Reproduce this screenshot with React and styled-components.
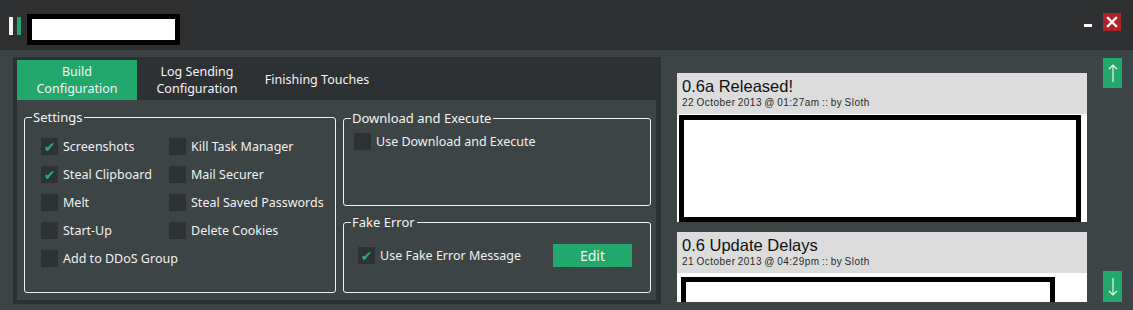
import React from 'react'
import styled, { createGlobalStyle } from 'styled-components'

const GlobalStyle = createGlobalStyle`
  html, body {
    margin: 0;
    padding: 0;
    background: #3c4446;
  }
  * {
    box-sizing: border-box;
  }
`

const green = '#22a86c'
const uiFont = `"Noto Sans", "Open Sans", sans-serif`

const settings = [
  { label: 'Screenshots', checked: true },
  { label: 'Kill Task Manager' },
  { label: 'Steal Clipboard', checked: true },
  { label: 'Mail Securer' },
  { label: 'Melt' },
  { label: 'Steal Saved Passwords' },
  { label: 'Start-Up' },
  { label: 'Delete Cookies' },
  { label: 'Add to DDoS Group' },
]

const news = [
  { title: '0.6a Released!', meta: '22 October 2013 @ 01:27am :: by Sloth', boxWidth: 402, boxHeight: 107 },
  { title: '0.6 Update Delays', meta: '21 October 2013 @ 04:29pm :: by Sloth', boxWidth: 374, boxHeight: 40, inset: 4 },
]

export default function App() {
  return (
    <Window>
      <GlobalStyle />
      <TitleBar>
        <Logo>
          <span className="bar-white" />
          <span className="bar-green" />
        </Logo>
        <TitleBox />
        <WindowControls>
          <Minimize />
          <CloseButton>
            <svg width="12" height="12" viewBox="0 0 12 12">
              <path d="M2 2 L10 10 M10 2 L2 10" stroke="#fff" strokeWidth="2.4" strokeLinecap="square" />
            </svg>
          </CloseButton>
        </WindowControls>
      </TitleBar>

      <Body>
        <TabPanel>
          <TabBar>
            <Tab $active>Build<br />Configuration</Tab>
            <Tab>Log Sending<br />Configuration</Tab>
            <Tab>Finishing Touches</Tab>
          </TabBar>
          <TabContent>
            <Group $width={312} $height={184}>
              <legend>Settings</legend>
              <SettingsGrid>
                {settings.map(s => (
                  <Check key={s.label} label={s.label} checked={s.checked} />
                ))}
              </SettingsGrid>
            </Group>
            <RightGroups>
              <Group $height={96} $top={1}>
                <legend>Download and Execute</legend>
                <SingleRow $pad={10}>
                  <Check label="Use Download and Execute" />
                </SingleRow>
              </Group>
              <Group $height={79} $top={8}>
                <legend>Fake Error</legend>
                <FakeErrorRow>
                  <Check label="Use Fake Error Message" checked />
                  <EditButton>Edit</EditButton>
                </FakeErrorRow>
              </Group>
            </RightGroups>
          </TabContent>
        </TabPanel>

        <NewsFeed>
          {news.map(n => (
            <NewsCard key={n.title}>
              <NewsHeader>
                <h3>{n.title}</h3>
                <p>{n.meta}</p>
              </NewsHeader>
              <NewsBody $inset={n.inset}>
                <RedactedBox style={{ width: n.boxWidth, height: n.boxHeight }} />
              </NewsBody>
            </NewsCard>
          ))}
        </NewsFeed>

        <ScrollButtons>
          <ScrollButton>
            <svg width="10" height="20" viewBox="0 0 10 20">
              <path d="M5 19 V2 M1 6 L5 2 L9 6" stroke="#eef3df" strokeWidth="1.2" fill="none" />
            </svg>
          </ScrollButton>
          <ScrollButton $down>
            <svg width="10" height="20" viewBox="0 0 10 20">
              <path d="M5 1 V18 M1 14 L5 18 L9 14" stroke="#eef3df" strokeWidth="1.2" fill="none" />
            </svg>
          </ScrollButton>
        </ScrollButtons>
      </Body>
    </Window>
  )
}

const Check = ({ label, checked }) => (
  <CheckRow>
    <CheckBox>{checked && '✔'}</CheckBox>
    <span>{label}</span>
  </CheckRow>
)

const Window = styled.div`
  width: 1133px;
  height: 310px;
  display: flex;
  flex-direction: column;
  background: #3c4446;
  overflow: hidden;
  font-family: ${uiFont};
`

const TitleBar = styled.div`
  height: 50px;
  flex-shrink: 0;
  background: #2d2f31;
  display: flex;
  align-items: center;
  padding: 0 12px 0 9px;
`

const Logo = styled.div`
  display: flex;
  gap: 4px;
  margin-top: 2px;
  span {
    width: 4px;
    height: 18px;
  }
  .bar-white {
    background: #f2f2f2;
  }
  .bar-green {
    background: ${green};
  }
`

const TitleBox = styled.div`
  width: 153px;
  height: 31px;
  margin-left: 6px;
  margin-top: 9px;
  background: #fff;
  border: 5px solid #000;
`

const WindowControls = styled.div`
  margin-left: auto;
  display: flex;
  align-items: center;
  gap: 11px;
  margin-top: -6px;
`

const Minimize = styled.div`
  width: 8px;
  height: 3px;
  background: #fff;
  margin-top: 6px;
`

const CloseButton = styled.div`
  width: 18px;
  height: 18px;
  background: #ab2428;
  display: flex;
  align-items: center;
  justify-content: center;
`

const Body = styled.div`
  flex: 1;
  display: flex;
  align-items: flex-start;
`

const TabPanel = styled.div`
  width: 648px;
  height: 247px;
  flex-shrink: 0;
  margin: 7px 0 0 13px;
  padding: 3px 5px 4px 4px;
  background: #2d3133;
  display: flex;
  flex-direction: column;
`

const TabBar = styled.div`
  height: 40px;
  display: flex;
`

const Tab = styled.div`
  width: 120px;
  display: flex;
  align-items: center;
  justify-content: center;
  text-align: center;
  font-size: 12.5px;
  line-height: 17px;
  color: #f4f4f4;
  background: ${p => (p.$active ? green : 'transparent')};
  padding-bottom: 1px;
`

const TabContent = styled.div`
  flex: 1;
  background: #3c4446;
  display: flex;
  gap: 7px;
  padding: 9px 5px 0 7px;
`

const Group = styled.fieldset`
  margin: ${p => p.$top || 0}px 0 0 0;
  padding: 0;
  width: ${p => (p.$width ? `${p.$width}px` : 'auto')};
  height: ${p => p.$height}px;
  flex-shrink: 0;
  border: 1.5px solid #f0f0f0;
  border-radius: 3px;
  color: #f0f0f0;
  min-width: 0;
  legend {
    margin-left: 7px;
    padding: 0 2px 0 1px;
    font-size: 13px;
    line-height: 17px;
    color: #f4f4f4;
  }
`

const RightGroups = styled.div`
  width: 308px;
  flex-shrink: 0;
  display: flex;
  flex-direction: column;
`

const SettingsGrid = styled.div`
  display: grid;
  grid-template-columns: 128px auto;
  grid-auto-rows: 28px;
  padding: 6px 0 0 16px;
  white-space: nowrap;
`

const SingleRow = styled.div`
  padding: 0 0 0 ${p => p.$pad}px;
`

const FakeErrorRow = styled.div`
  display: flex;
  align-items: center;
  justify-content: space-between;
  padding: 10px 18px 0 14px;
`

const CheckRow = styled.div`
  display: flex;
  align-items: center;
  gap: 5px;
  font-size: 12.5px;
  color: #f0f0f0;
  height: 28px;
`

const CheckBox = styled.div`
  width: 17px;
  height: 17px;
  flex-shrink: 0;
  background: #2e3234;
  color: #22b06e;
  font-size: 14px;
  line-height: 18px;
  text-align: center;
  font-family: "DejaVu Sans", sans-serif;
`

const EditButton = styled.div`
  width: 79px;
  height: 23px;
  background: ${green};
  color: #f4f4f4;
  font-size: 14px;
  display: flex;
  align-items: center;
  justify-content: center;
`

const NewsFeed = styled.div`
  width: 410px;
  height: 229px;
  flex-shrink: 0;
  margin: 23px 0 0 16px;
  overflow: hidden;
  display: flex;
  flex-direction: column;
  gap: 10px;
`

const NewsCard = styled.div`
  flex-shrink: 0;
  background: #fff;
`

const NewsHeader = styled.div`
  height: 41px;
  background: #dcdcdc;
  padding: 4px 0 0 5px;
  font-family: "Liberation Sans", Arial, sans-serif;
  h3 {
    margin: 0;
    font-size: 16.5px;
    line-height: 19px;
    font-weight: normal;
    color: #111;
  }
  p {
    margin: 1px 0 0;
    font-size: 10px;
    line-height: 12px;
    letter-spacing: 0.5px;
    word-spacing: -1px;
    color: #2a2a2a;
    font-weight: normal;
  }
`

const NewsBody = styled.div`
  padding: 1px 6px 0 ${p => p.$inset || 2}px;
  padding-top: ${p => (p.$inset ? 4 : 1)}px;
`

const RedactedBox = styled.div`
  border: 5px solid #000;
  background: #fff;
`

const ScrollButtons = styled.div`
  width: 19px;
  height: 244px;
  flex-shrink: 0;
  margin: 8px 0 0 16px;
  display: flex;
  flex-direction: column;
  justify-content: space-between;
`

const ScrollButton = styled.div`
  height: ${p => (p.$down ? 31 : 30)}px;
  background: ${green};
  display: flex;
  align-items: center;
  justify-content: center;
`
